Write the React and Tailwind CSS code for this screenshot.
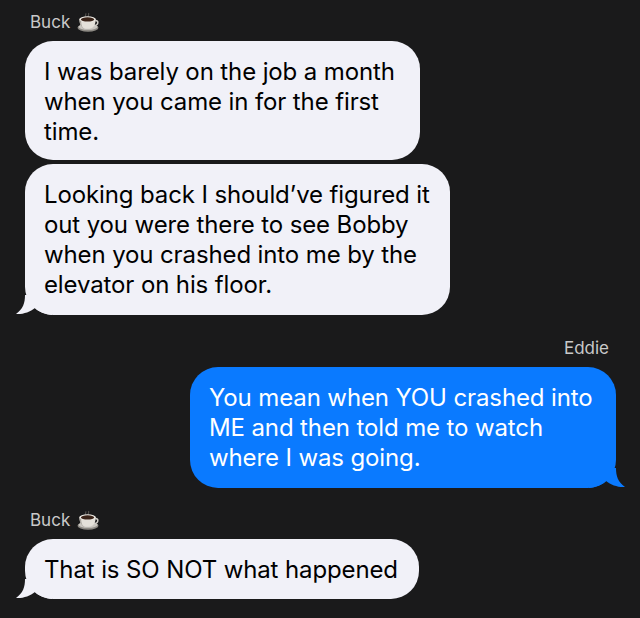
import React from 'react';

const CoffeeIcon = () => (
    <svg width="23" height="21" viewBox="0 0 24 22" className="ml-[7px]">
        {/* steam */}
        <path d="M9 5 C8 4 10 3 9 1.5 M12 5 C11 4 13 3 12 1" stroke="#55524f" strokeWidth="1.2" fill="none" />
        {/* saucer */}
        <ellipse cx="11.5" cy="16.5" rx="11" ry="4.2" fill="#8d8a84" />
        <ellipse cx="11.5" cy="15.5" rx="10" ry="3.2" fill="#c9c6c0" />
        {/* cup */}
        <path d="M19 9 C23 8.5 23 14 17 14.5" stroke="#cfccc6" strokeWidth="1.6" fill="none" />
        <path d="M2.5 7.5 C2.5 14 5 17.5 11 17.5 C17 17.5 19.5 14 19.5 7.5 Z" fill="#e4e1da" />
        <path d="M2.5 8 C3 14 6 17.5 8 17.5 C5 17 4 12 4.5 8.5 Z" fill="#a9a59e" />
        <ellipse cx="11" cy="7.5" rx="8.7" ry="3" fill="#efece6" />
        <ellipse cx="11" cy="7.8" rx="7" ry="2.2" fill="#3a2318" />
    </svg>
);

const Sender = ({ name, coffee, className }) => (
    <div className={`flex items-center h-[22px] text-[17px] leading-[22px] text-[#c9c9c9] ${className}`}>
        <span>{name}</span>
        {coffee && <CoffeeIcon />}
    </div>
);

const TailLeft = () => (
    <svg width="36" height="20" viewBox="0 0 36 20" className="absolute left-[-9px] bottom-0">
        <path d="M9 0 C9 8 7 14 0 19 C7 19.5 14 17 19 13 C23 17 29 19.5 36 20 L36 0 Z" fill="#f1f1f8" />
    </svg>
);

const TailRight = () => (
    <svg width="36" height="20" viewBox="0 0 36 20" className="absolute right-[-9px] bottom-0">
        <path d="M27 0 C27 8 29 14 36 19 C29 19.5 22 17 17 13 C13 17 7 19.5 0 20 L0 0 Z" fill="#0a7aff" />
    </svg>
);

const Bubble = ({ lines, outgoing, tail, className }) => (
    <div
        className={`relative rounded-[28px] pl-[19px] pt-[16px] text-[24px] leading-[30px] tracking-[-0.12px] ${
            outgoing ? 'bg-[#0a7aff] text-white' : 'bg-[#f1f1f8] text-black'
        } ${className}`}
    >
        {lines.map((line) => (
            <div key={line} className="relative whitespace-nowrap z-10">{line}</div>
        ))}
        {tail && (outgoing ? <TailRight /> : <TailLeft />)}
    </div>
);

const App = () => {
    return (
        <div
            className="w-[640px] h-[618px] overflow-hidden bg-[#1a1a1b] flex flex-col pt-[11px] pl-[25px] pr-[24px]"
            style={{ fontFamily: 'Inter, "Noto Sans", sans-serif' }}
        >
            <Sender name="Buck" coffee className="ml-[5px]" />
            <Bubble
                className="w-[395px] mt-[8px] h-[119px]"
                lines={['I was barely on the job a month', 'when you came in for the first', 'time.']}
            />
            <Bubble
                className="w-[425px] mt-[4px] h-[151px]"
                tail
                lines={['Looking back I should\u2019ve figured it', 'out you were there to see Bobby', 'when you crashed into me by the', 'elevator on his floor.']}
            />
            <Sender name="Eddie" className="self-end mt-[22px] mr-[7px]" />
            <Bubble
                className="w-[426px] self-end mt-[8px] h-[121px]"
                outgoing
                tail
                lines={['You mean when YOU crashed into', 'ME and then told me to watch', 'where I was going.']}
            />
            <Sender name="Buck" coffee className="ml-[5px] mt-[21px]" />
            <Bubble className="w-[394px] mt-[8px] h-[60px]" tail lines={['That is SO NOT what happened']} />
        </div>
    );
};

export default App;
